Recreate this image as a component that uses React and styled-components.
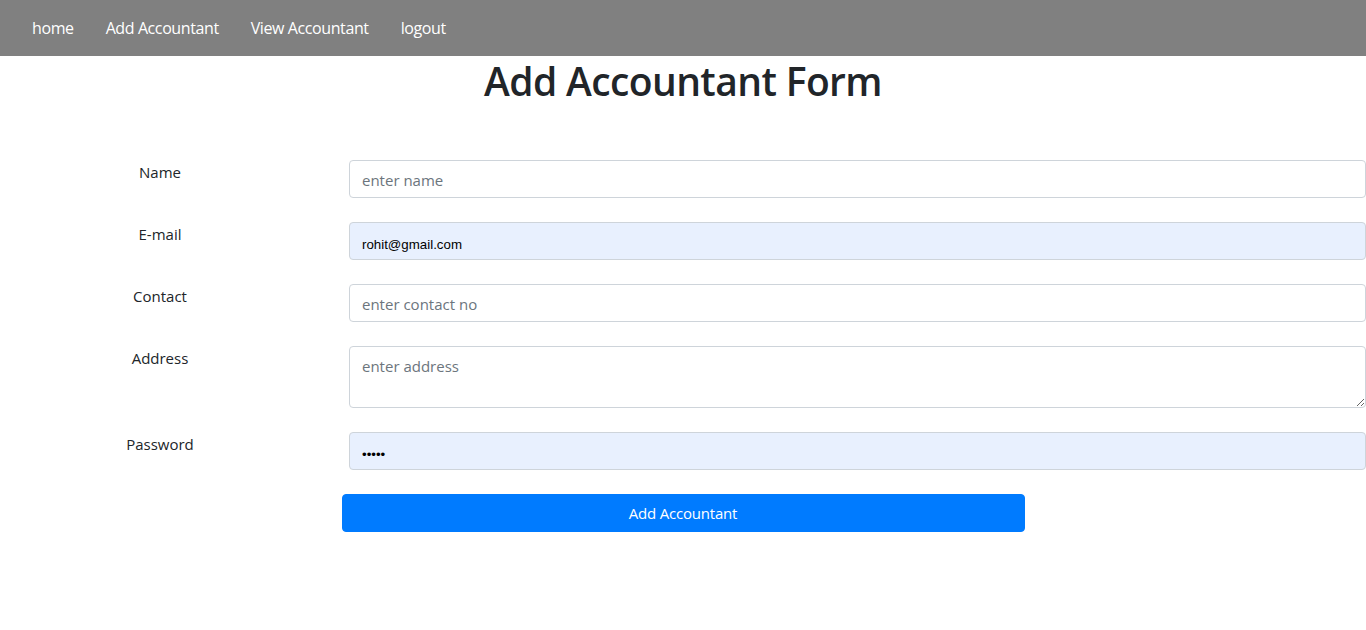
import React from "react";
import styled, { createGlobalStyle } from "styled-components";

const GlobalStyle = createGlobalStyle`
    body {
        margin: 0;
        font-family: "Open Sans", "Noto Sans", sans-serif;
        font-size: 16px;
        line-height: 1.5;
        color: #212529;
        background: #fff;
    }
    * { box-sizing: border-box; }
`

const NavBar = styled.nav`
    height: 56px;
    background-color: gray;
    display: flex;
    align-items: center;
    padding: 0 16px;
`

const NavLink = styled.a`
    color: #fff;
    padding: 0 16px;
    text-decoration: none;
    font-size: 16px;
    letter-spacing: -0.4px;
    cursor: pointer;
`

const Title = styled.h1`
    margin: 0 0 56px;
    padding-top: 1px;
    text-align: center;
    font-size: 39px;
    font-weight: 600;
    line-height: 47px;
    letter-spacing: -0.6px;
`

const Form = styled.form`
    display: flex;
    flex-direction: column;
    gap: 24px;
`

const Row = styled.div`
    display: grid;
    grid-template-columns: 349px 1fr;
    align-items: start;
`

const Label = styled.label`
    width: 320px;
    text-align: center;
    font-size: 15px;
    line-height: 24px;
`

const fieldStyles = `
    width: 100%;
    display: block;
    border: 1px solid #ced4da;
    border-radius: 4px;
    padding: 7px 12px 5px;
    font-family: "Open Sans", "Noto Sans", sans-serif;
    font-size: 15px;
    line-height: 24px;
    color: #495057;
    outline: none;
    &::placeholder { color: #6c757d; }
`

const Input = styled.input`
    ${fieldStyles}
    height: 38px;
    background: ${(p) => (p.$filled ? "#e8f0fe" : "#fff")};
    ${(p) => p.$filled && `
        color: #000;
        font-family: "Liberation Sans", Arial, sans-serif;
        font-size: 13.3px;
        padding-top: 9px;
        padding-bottom: 3px;
    `}
`

const TextArea = styled.textarea`
    ${fieldStyles}
    height: 62px;
    resize: vertical;
`

const ButtonRow = styled.div`
    display: flex;
    justify-content: center;
`

const SubmitButton = styled.button`
    width: 683px;
    height: 38px;
    background: #007bff;
    border: 1px solid #007bff;
    border-radius: 4px;
    color: #fff;
    font-family: "Open Sans", "Noto Sans", sans-serif;
    font-size: 15px;
    letter-spacing: -0.2px;
    cursor: pointer;
`

export default function App() {
    const fields = [
        { label: "Name", placeholder: "enter name" },
        { label: "E-mail", value: "rohit@gmail.com", filled: true },
        { label: "Contact", placeholder: "enter contact no" },
        { label: "Address", placeholder: "enter address", area: true },
        { label: "Password", value: "12345", filled: true, type: "password" },
    ];

    return <>
        <GlobalStyle />
        <NavBar>
            <NavLink>home</NavLink>
            <NavLink>Add Accountant</NavLink>
            <NavLink>View Accountant</NavLink>
            <NavLink>logout</NavLink>
        </NavBar>
        <Title>Add Accountant Form</Title>
        <Form onSubmit={(e) => e.preventDefault()}>
            {fields.map((f) => (
                <Row key={f.label}>
                    <Label>{f.label}</Label>
                    {f.area
                        ? <TextArea placeholder={f.placeholder}></TextArea>
                        : <Input
                            type={f.type || "text"}
                            placeholder={f.placeholder}
                            defaultValue={f.value}
                            $filled={f.filled} />}
                </Row>
            ))}
            <ButtonRow>
                <SubmitButton type="submit">Add Accountant</SubmitButton>
            </ButtonRow>
        </Form>
    </>
}
